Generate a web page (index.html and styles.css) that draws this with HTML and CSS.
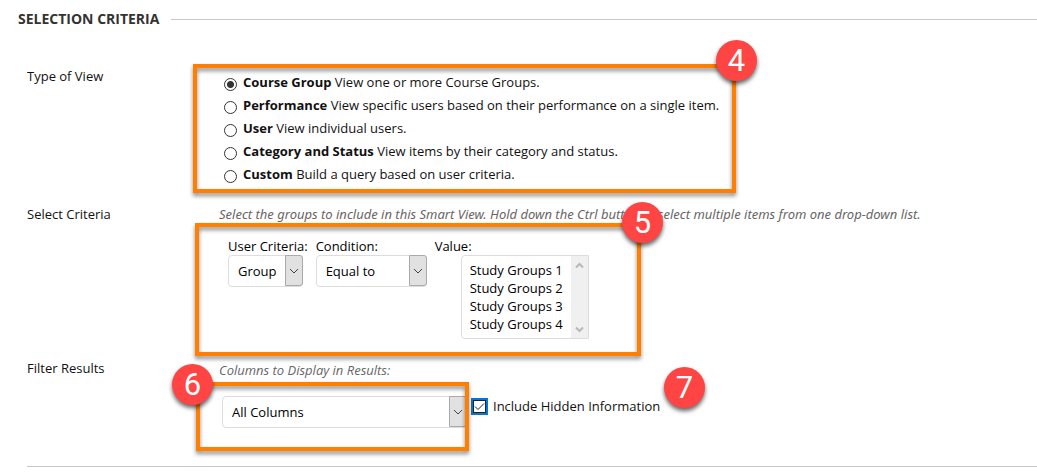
FILE: index.html
```html
<!DOCTYPE html>
<html lang="en">
<head>
  <meta charset="UTF-8">
  <title>Selection Criteria</title>
  <link rel="stylesheet" href="styles.css">
</head>
<body>
  <form class="criteria-form">
    <h2 class="section-title">SELECTION CRITERIA</h2>

    <div class="row view-row">
      <div class="row-label" id="view-label">Type of View</div>
      <div class="field" role="radiogroup" aria-labelledby="view-label">
        <label class="option"><input type="radio" name="view" checked><span><b>Course Group</b> View one or more Course Groups.</span></label>
        <label class="option"><input type="radio" name="view"><span><b>Performance</b> View specific users based on their performance on a single item.</span></label>
        <label class="option"><input type="radio" name="view"><span><b>User</b> View individual users.</span></label>
        <label class="option"><input type="radio" name="view"><span><b>Category and Status</b> View items by their category and status.</span></label>
        <label class="option"><input type="radio" name="view"><span><b>Custom</b> Build a query based on user criteria.</span></label>
        <div class="highlight highlight-view"></div>
        <div class="badge badge-view">4</div>
      </div>
    </div>

    <div class="row select-row">
      <div class="row-label">Select Criteria</div>
      <div class="field">
        <p class="hint hint-long">Select the groups to include in this Smart View. Hold down the Ctrl button to select multiple items from one drop-down list.</p>
        <div class="criteria">
          <div class="criterion">
            <label for="user-criteria">User Criteria:</label>
            <div class="dropdown dropdown-group">
              <select id="user-criteria"><option>Group</option></select>
              <span class="arrow"><svg width="10" height="6" viewBox="0 0 10 6"><path d="M1 1l4 4 4-4"/></svg></span>
            </div>
          </div>
          <div class="criterion">
            <label for="condition">Condition:</label>
            <div class="dropdown dropdown-condition">
              <select id="condition"><option>Equal to</option></select>
              <span class="arrow"><svg width="10" height="6" viewBox="0 0 10 6"><path d="M1 1l4 4 4-4"/></svg></span>
            </div>
          </div>
          <div class="criterion">
            <label for="value">Value:</label>
            <div class="listbox">
              <select id="value" multiple size="4">
                <option>Study Groups 1</option>
                <option>Study Groups 2</option>
                <option>Study Groups 3</option>
                <option>Study Groups 4</option>
              </select>
              <span class="scrollbar">
                <svg width="9" height="7" viewBox="0 0 9 7"><path d="M1 5.500L4.500 2 8 5.500"/></svg>
                <svg width="9" height="7" viewBox="0 0 9 7"><path d="M1 1.500L4.500 5 8 1.500"/></svg>
              </span>
            </div>
          </div>
        </div>
        <div class="highlight highlight-select"></div>
        <div class="badge badge-select">5</div>
      </div>
    </div>

    <div class="row filter-row">
      <div class="row-label">Filter Results</div>
      <div class="field">
        <label class="hint" for="columns">Columns to Display in Results:</label>
        <div class="filters">
          <div class="dropdown dropdown-columns">
            <select id="columns"><option>All Columns</option></select>
            <span class="arrow"><svg width="10" height="6" viewBox="0 0 10 6"><path d="M1 1l4 4 4-4"/></svg></span>
          </div>
          <label class="hidden-info">
            <span class="check">
              <input type="checkbox" checked>
              <svg width="13" height="13" viewBox="0 0 13 13"><path d="M2 6.500l3 3 6-6"/></svg>
            </span>
            Include Hidden Information
          </label>
        </div>
        <div class="highlight highlight-filter"></div>
        <div class="badge badge-filter">6</div>
        <div class="badge badge-hidden">7</div>
      </div>
    </div>
  </form>
</body>
</html>
```

FILE: styles.css
```css
* { box-sizing: border-box; }
body { margin: 0; background: #fff; color: #111; font: 13px/20px "Open Sans", "Noto Sans", sans-serif; }
svg { display: block; fill: none; }

.section-title { display: flex; align-items: center; gap: 12px; margin: 0 0 37px; padding: 9px 0 0 18px; color: #333; font-size: 14px; line-height: 20px; }
.section-title::after { content: ""; flex: 1; height: 1px; background: #c8c8c8; }

.row { display: flex; margin-left: 27px; }
.row-label { flex: none; width: 192px; }
.field { position: relative; flex: 1; }
.hint { display: block; margin: 0; color: #666; font-style: italic; white-space: nowrap; }
.hint-long { font-family: "Noto Sans", "Open Sans", sans-serif; }

/* type of view */
.view-row { padding-bottom: 19px; }
.view-row .field { padding-top: 4px; }
.option { display: flex; align-items: center; gap: 6px; height: 23px; padding-left: 5px; }
.option input { appearance: none; flex: none; width: 13px; height: 13px; margin: 6px 0 0; border: 1px solid #333; border-radius: 50%; background: #fff; }
.option input:checked { background: radial-gradient(circle, #333 3px, #fff 4px); }

/* dropdowns */
.dropdown { position: relative; height: 32px; }
.dropdown select { appearance: none; width: 100%; height: 32px; padding: 0 18px 0 9px; border: 1px solid #ddd; border-radius: 4px; background: #fff; color: #000; font: inherit; }
.arrow { position: absolute; top: 0; right: 0; display: flex; align-items: center; justify-content: center; width: 18px; height: 31px; border: 1px solid #aaa; border-radius: 0 3px 3px 0; background: #e1e1e1; pointer-events: none; }
.arrow svg { stroke: #444; }
.dropdown-group { width: 75px; }
.dropdown-condition { width: 111px; }
.dropdown-columns { width: 245px; }

/* select criteria */
.select-row { padding-bottom: 19px; }
.criteria { display: flex; gap: 8px; margin-top: 13px; padding-left: 9px; color: #000; }
.criterion label { display: block; line-height: 18px; }
.listbox { display: flex; width: 128px; height: 84px; margin-left: 26px; border: 1px solid #ddd; border-radius: 4px 0 0 4px; }
.listbox select { flex: 1; min-width: 0; height: 82px; padding: 5px 0 0 8px; border: 0; background: none; color: #000; font: inherit; line-height: 18px; overflow: hidden; outline: 0; }
.listbox option { height: 18px; min-height: 18px; padding: 0; line-height: 18px; }
.scrollbar { display: flex; flex-direction: column; align-items: center; justify-content: space-between; width: 17px; padding: 6px 0 5px; background: #f0f0f0; }
.scrollbar svg { stroke: #b8b8b8; stroke-width: 2; }

/* filter results */
.filter-row { padding-bottom: 38px; border-bottom: 1px solid #c8c8c8; }
.filter-row .hint { padding-top: 2px; }
.filters { display: flex; gap: 4px; margin-top: 16px; padding-left: 3px; }
.hidden-info { display: flex; align-items: center; gap: 5px; height: 19px; }
.check { position: relative; width: 17px; height: 17px; margin-top: 2px; }
.check input { appearance: none; display: block; width: 17px; height: 17px; margin: 0; border: 2px solid #0078d7; background: #fff; box-shadow: inset 0 0 0 1px #222; }
.check svg { position: absolute; top: 2px; left: 2px; stroke: #222; pointer-events: none; }

/* numbered callouts */
.highlight { position: absolute; border: 4px solid #ff8000; filter: drop-shadow(0 3px 2px rgba(0, 0, 0, .45)); pointer-events: none; }
.highlight-view { top: -2px; left: -26px; width: 543px; height: 129px; }
.highlight-select { top: 19px; left: -24px; width: 446px; height: 133px; }
.highlight-filter { top: 24px; left: -23px; width: 273px; height: 69px; }
.badge { position: absolute; width: 41px; height: 41px; border-radius: 50%; background: #ff4444; box-shadow: 0 3px 4px rgba(0, 0, 0, .6); color: #fff; font: 31px/41px Roboto, "Liberation Sans", sans-serif; text-align: center; }
.badge-view { top: -26px; left: 497px; }
.badge-select { top: -2px; left: 403px; }
.badge-filter { top: 6px; left: -47px; }
.badge-hidden { top: 9px; left: 445px; }
```
